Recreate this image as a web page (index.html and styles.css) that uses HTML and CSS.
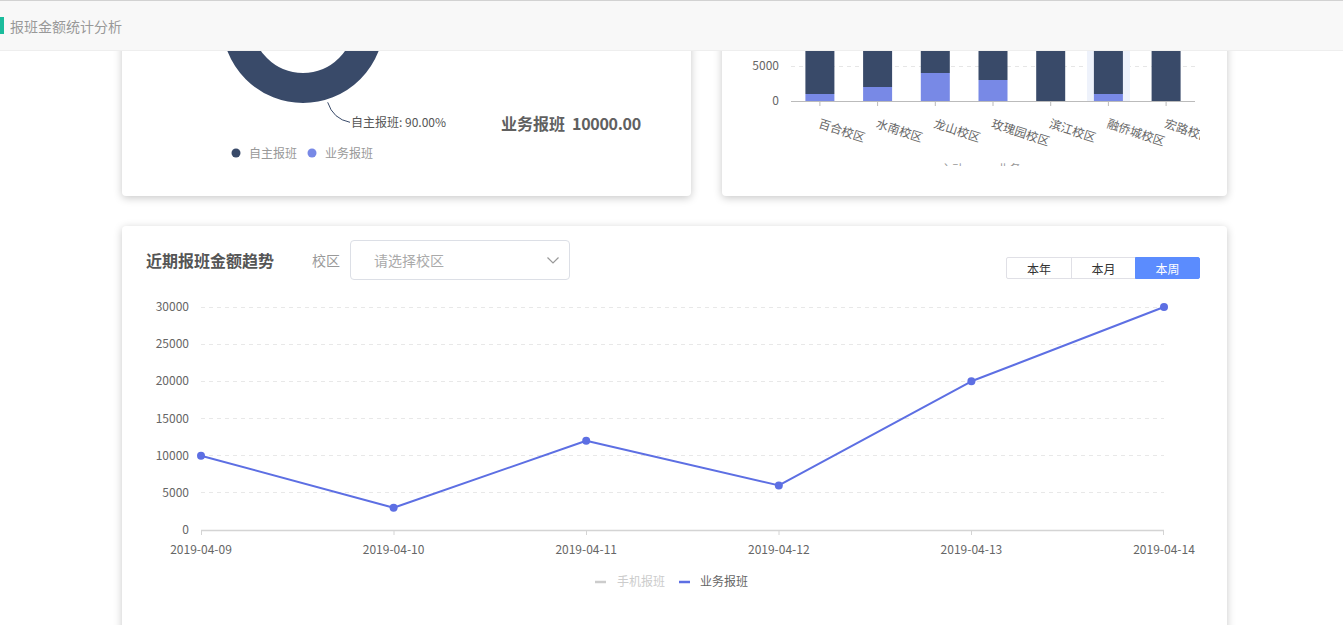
FILE: index.html
```html
<!DOCTYPE html>
<html lang="zh-CN">
<head>
<meta charset="utf-8">
<title>报班金额统计分析</title>
<link rel="stylesheet" href="styles.css">
</head>
<body>
<header class="topbar">
  <span class="topbar-mark"></span>
  <span class="topbar-title">报班金额统计分析</span>
</header>

<main class="page">
  <section class="row-top">
    <div class="card card-pie">
      <svg class="pie-chart" width="379" height="180" viewBox="0 0 379 180">
        <circle cx="181" cy="6" r="66" fill="none" stroke="#394a69" stroke-width="30"/>
        <circle cx="181" cy="6" r="66" fill="none" stroke="#7889e6" stroke-width="30" stroke-dasharray="41.47 414.7" transform="rotate(-90 181 6)"/>
        <path d="M205.7 86.3 Q211 103 228 106.3" fill="none" stroke="#394a69" stroke-width="1"/>
        <text class="t12 c55" x="229" y="110.5">自主报班: 90.00%</text>
        <circle cx="114" cy="137" r="4.5" fill="#394a69"/>
        <text class="t12 c99" x="127" y="141.5">自主报班</text>
        <circle cx="190" cy="137" r="4.5" fill="#7889e6"/>
        <text class="t12 c99" x="203" y="141.5">业务报班</text>
      </svg>
      <div class="pie-summary">业务报班<span class="pie-amount">10000.00</span></div>
    </div>

    <div class="card card-bar">
      <svg class="bar-chart" width="478" height="150" viewBox="0 0 478 150">
        <text class="t12 c66" x="57" y="54" text-anchor="end">5000</text>
        <text class="t12 c66" x="57" y="89" text-anchor="end">0</text>
        <line x1="69" y1="50.5" x2="473" y2="50.5" stroke="#e6e6e6" stroke-dasharray="4 4"/>
        <rect x="365" y="0" width="43" height="85" fill="#eef2fb"/>

        <rect x="83.4" y="0" width="29" height="78" fill="#394a69"/>
        <rect x="83.4" y="78" width="29" height="7" fill="#7889e6"/>
        <rect x="141.1" y="0" width="29" height="71" fill="#394a69"/>
        <rect x="141.1" y="71" width="29" height="14" fill="#7889e6"/>
        <rect x="198.8" y="0" width="29" height="57" fill="#394a69"/>
        <rect x="198.8" y="57" width="29" height="28" fill="#7889e6"/>
        <rect x="256.5" y="0" width="29" height="64" fill="#394a69"/>
        <rect x="256.5" y="64" width="29" height="21" fill="#7889e6"/>
        <rect x="314.2" y="0" width="29" height="85" fill="#394a69"/>
        <rect x="371.9" y="0" width="29" height="78" fill="#394a69"/>
        <rect x="371.9" y="78" width="29" height="7" fill="#7889e6"/>
        <rect x="429.6" y="0" width="29" height="85" fill="#394a69"/>

        <line x1="69" y1="85.5" x2="473" y2="85.5" stroke="#bbbbbb"/>
        <g stroke="#bbbbbb">
          <line x1="97.9" y1="85" x2="97.9" y2="90"/>
          <line x1="155.6" y1="85" x2="155.6" y2="90"/>
          <line x1="213.3" y1="85" x2="213.3" y2="90"/>
          <line x1="271" y1="85" x2="271" y2="90"/>
          <line x1="328.7" y1="85" x2="328.7" y2="90"/>
          <line x1="386.4" y1="85" x2="386.4" y2="90"/>
          <line x1="444.1" y1="85" x2="444.1" y2="90"/>
        </g>
        <text class="t12 c66" x="97" y="111.5" transform="rotate(18 97 107.5)">百合校区</text>
        <text class="t12 c66" x="154.6" y="111.5" transform="rotate(18 154.6 107.5)">水南校区</text>
        <text class="t12 c66" x="212.3" y="111.5" transform="rotate(18 212.3 107.5)">龙山校区</text>
        <text class="t12 c66" x="270" y="111.5" transform="rotate(18 270 107.5)">玫瑰园校区</text>
        <text class="t12 c66" x="327.7" y="111.5" transform="rotate(18 327.7 107.5)">滨江校区</text>
        <text class="t12 c66" x="385.4" y="111.5" transform="rotate(18 385.4 107.5)">融侨城校区</text>
        <text class="t12 c66" x="443.1" y="111.5" transform="rotate(18 443.1 107.5)">宏路校区</text>
        <text class="t12 c99" x="218" y="157.5">主动</text>
        <text class="t12 c99" x="275" y="157.5">业务</text>
      </svg>
    </div>
  </section>

  <section class="card card-trend">
    <div class="trend-head">
      <h2 class="trend-title">近期报班金额趋势</h2>
      <span class="trend-label">校区</span>
      <div class="select">
        <span class="select-placeholder">请选择校区</span>
        <svg class="select-arrow" width="14" height="14" viewBox="0 0 14 14">
          <polyline points="1.5,4.5 7,10 12.5,4.5" fill="none" stroke="#999" stroke-width="1.2"/>
        </svg>
      </div>
      <div class="btn-group">
        <span class="btn">本年</span>
        <span class="btn">本月</span>
        <span class="btn btn-active">本周</span>
      </div>
    </div>

    <svg class="trend-chart" width="1105" height="320" viewBox="0 0 1105 320">
      <g class="t12 c66" text-anchor="end">
        <text x="67" y="25">30000</text>
        <text x="67" y="62.2">25000</text>
        <text x="67" y="99.3">20000</text>
        <text x="67" y="136.5">15000</text>
        <text x="67" y="173.7">10000</text>
        <text x="67" y="210.8">5000</text>
        <text x="67" y="248">0</text>
      </g>
      <g stroke="#e8e8e8" stroke-dasharray="4 4">
        <line x1="79" y1="21.5" x2="1042" y2="21.5"/>
        <line x1="79" y1="58.5" x2="1042" y2="58.5"/>
        <line x1="79" y1="95.5" x2="1042" y2="95.5"/>
        <line x1="79" y1="132.5" x2="1042" y2="132.5"/>
        <line x1="79" y1="169.5" x2="1042" y2="169.5"/>
        <line x1="79" y1="206.5" x2="1042" y2="206.5"/>
      </g>
      <line x1="79" y1="244.5" x2="1042" y2="244.5" stroke="#d4d4d4" stroke-width="1.5"/>
      <g stroke="#d4d4d4">
        <line x1="79.5" y1="244" x2="79.5" y2="249"/>
        <line x1="272" y1="244" x2="272" y2="249"/>
        <line x1="464.5" y1="244" x2="464.5" y2="249"/>
        <line x1="657" y1="244" x2="657" y2="249"/>
        <line x1="849.5" y1="244" x2="849.5" y2="249"/>
        <line x1="1041.5" y1="244" x2="1041.5" y2="249"/>
      </g>
      <g class="t12 c66" text-anchor="middle">
        <text x="79" y="268">2019-04-09</text>
        <text x="271.6" y="268">2019-04-10</text>
        <text x="464.2" y="268">2019-04-11</text>
        <text x="656.8" y="268">2019-04-12</text>
        <text x="849.4" y="268">2019-04-13</text>
        <text x="1042" y="268">2019-04-14</text>
      </g>
      <polyline points="79,169.7 271.6,221.7 464.2,154.8 656.8,199.4 849.4,95.3 1042,21" fill="none" stroke="#5d6fe3" stroke-width="2" stroke-linejoin="round"/>
      <g fill="#5d6fe3">
        <circle cx="79" cy="169.7" r="4"/>
        <circle cx="271.6" cy="221.7" r="4"/>
        <circle cx="464.2" cy="154.8" r="4"/>
        <circle cx="656.8" cy="199.4" r="4"/>
        <circle cx="849.4" cy="95.3" r="4"/>
        <circle cx="1042" cy="21" r="4"/>
      </g>
      <line x1="473" y1="296" x2="484" y2="296" stroke="#cccccc" stroke-width="2.5"/>
      <text class="t12 ccc" x="495" y="300">手机报班</text>
      <line x1="557" y1="296" x2="568" y2="296" stroke="#5d6fe3" stroke-width="2.5"/>
      <text class="t12 c66" x="578" y="300">业务报班</text>
    </svg>
  </section>
</main>
</body>
</html>
```

FILE: styles.css
```css
* { box-sizing: border-box; }

html, body {
  margin: 0;
  padding: 0;
  background: #ffffff;
  font-family: "Noto Sans CJK SC", "Noto Sans", "Liberation Sans", sans-serif;
}

.topbar {
  position: fixed;
  top: 0;
  left: 0;
  right: 0;
  height: 51px;
  z-index: 10;
  display: flex;
  align-items: center;
  background: #f8f8f8;
  border-top: 1px solid #d2d2d2;
  border-bottom: 1px solid #eeeeee;
}

.topbar-mark {
  width: 4px;
  height: 17px;
  background: #1abc9c;
  margin-right: 6px;
}

.topbar-title {
  font-size: 14px;
  color: #999999;
  line-height: 20px;
}

.page {
  width: 1105px;
  margin-left: 122px;
  padding-top: 16px;
  padding-bottom: 20px;
  display: flex;
  flex-direction: column;
  gap: 30px;
}

.row-top {
  display: grid;
  grid-template-columns: 569px 505px;
  column-gap: 31px;
  height: 180px;
}

.card {
  background: #ffffff;
  border-radius: 4px;
  box-shadow: 0 2px 8px rgba(0, 0, 0, 0.22);
}

.card-pie {
  display: grid;
  grid-template-columns: 379px 1fr;
  align-items: start;
}

svg { display: block; }

.pie-summary {
  margin-top: 95px;
  font-size: 16px;
  line-height: 24px;
  font-weight: bold;
  color: #606060;
  white-space: nowrap;
}

.pie-amount {
  margin-left: 7px;
  letter-spacing: -0.3px;
}

.t12 { font-size: 12px; font-family: "Noto Sans CJK SC", "Noto Sans", sans-serif; }
.c55 { fill: #555555; }
.c66 { fill: #666666; }
.c99 { fill: #999999; }
.ccc { fill: #cccccc; }

.card-trend {
  height: 420px;
  padding: 14px 27px 0 24px;
}

.trend-head {
  display: flex;
  align-items: center;
  height: 40px;
}

.trend-title {
  margin: 0;
  font-size: 16px;
  font-weight: bold;
  color: #555555;
  line-height: 24px;
}

.trend-label {
  margin-left: 38px;
  font-size: 14px;
  color: #999999;
}

.select {
  margin-left: 10px;
  width: 220px;
  height: 40px;
  border: 1px solid #dcdfe6;
  border-radius: 4px;
  display: flex;
  align-items: center;
  justify-content: space-between;
  padding: 0 9px 0 23px;
}

.select-placeholder {
  font-size: 14px;
  color: #aaaaaa;
}

.btn-group {
  margin-left: auto;
  align-self: flex-end;
  margin-bottom: 1px;
  display: flex;
}

.btn {
  width: 65px;
  height: 22px;
  display: flex;
  align-items: center;
  justify-content: center;
  font-size: 12px;
  color: #333333;
  border: 1px solid #e0e0e6;
  background: #ffffff;
}

.btn + .btn { margin-left: -1px; }
.btn:first-child { width: 66px; border-radius: 2px 0 0 2px; }
.btn:last-child { border-radius: 0 2px 2px 0; }

.btn-active {
  background: #5b8cfe;
  border-color: #5b8cfe;
  color: #ffffff;
}

.trend-chart {
  margin-top: 6px;
  margin-left: -24px;
}
```
